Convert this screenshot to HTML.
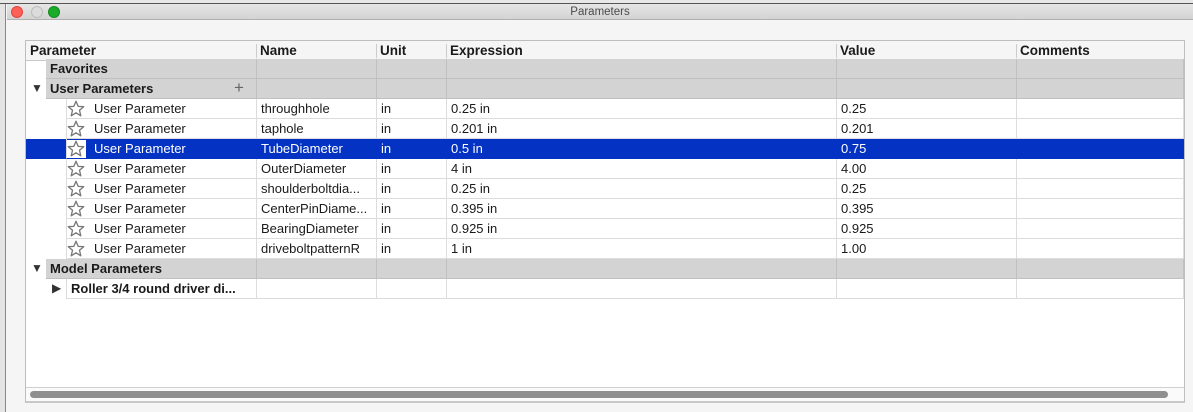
<!DOCTYPE html>
<html><head><meta charset="utf-8"><style>
*{box-sizing:border-box;margin:0;padding:0}
body{width:1193px;height:412px;overflow:hidden;background:#f5f5f5;font-family:"Liberation Sans",Arial,sans-serif;font-size:13px;color:#1a1a1a;position:relative}
.abs{position:absolute}
#bg{left:0;top:0;width:1193px;height:4px;background:#e8e8e8;border-bottom:1px solid #555}
#lstrip{left:0;top:4px;width:6px;height:408px;background:#e4e4e4;border-right:1px solid #888}
#title{left:7px;top:4px;width:1186px;height:16px;background:linear-gradient(#e6e6e6,#d3d3d3);border-bottom:1px solid #b0b0b0;text-align:center;font-size:11.5px;line-height:16px;color:#4a4a4a}
.dot{position:absolute;top:2px;width:12px;height:12px;border-radius:50%}
#box{left:25px;top:40px;width:1160px;height:363px;background:#fff;border:1px solid #bdbdbd;border-bottom:2px solid #c8c8c8}
.row{position:absolute;left:0;width:1158px;height:20px;line-height:19px;white-space:nowrap}
.c{position:absolute;top:0;height:20px;padding-left:4px;border-right:1px solid #dcdcdc;border-bottom:1px solid #dcdcdc;overflow:hidden}
.hdr .c{font-weight:bold;font-size:13.5px;border-bottom:1px solid #c8c8c8;border-right:none;background:#f5f5f5}
.hdr .c span{position:absolute;left:0;top:3px;height:14px;border-left:1px solid #ccc}
.grp .c{background:#d3d3d3;border-color:#c0c0c0;font-weight:bold}
.sel .c{background:#0433c3;color:#fff;border-color:#0433c3}
.star{position:absolute;top:1px}
.tri{position:absolute;font-size:12px;color:#333}
</style></head><body>
<div class="abs" id="bg"></div>
<div class="abs" id="lstrip"></div>
<div class="abs" id="title">Parameters
<div class="dot" style="left:4px;background:#fe5f57;border:1px solid #e0443e"></div>
<div class="dot" style="left:24px;background:#dcdcdc;border:1px solid #bdbdbd"></div>
<div class="dot" style="left:41px;background:#1aab29;border:1px solid #128c22"></div>
</div>
<div class="abs" id="box">
<div class="row hdr" style="top:0;height:18px">
 <div class="c" style="left:0;width:230px">Parameter</div>
 <div class="c" style="left:230px;width:120px"><span></span>Name</div>
 <div class="c" style="left:350px;width:70px"><span></span>Unit</div>
 <div class="c" style="left:420px;width:390px"><span></span>Expression</div>
 <div class="c" style="left:810px;width:180px"><span></span>Value</div>
 <div class="c" style="left:990px;width:168px"><span></span>Comments</div>
</div>
<div class="row grp" style="top:18px">
 <div class="c" style="left:20px;width:211px">Favorites</div>
 <div class="c" style="left:231px;width:120px"></div><div class="c" style="left:351px;width:70px"></div><div class="c" style="left:421px;width:390px"></div><div class="c" style="left:811px;width:180px"></div><div class="c" style="left:991px;width:167px"></div>
</div>
<div class="row grp" style="top:38px">
 <div class="tri" style="left:5px;top:0">▼</div>
 <div class="c" style="left:20px;width:211px">User Parameters<span style="position:absolute;left:188px;top:-1px;font-weight:normal;color:#666;font-size:17px">+</span></div>
 <div class="c" style="left:231px;width:120px"></div><div class="c" style="left:351px;width:70px"></div><div class="c" style="left:421px;width:390px"></div><div class="c" style="left:811px;width:180px"></div><div class="c" style="left:991px;width:167px"></div>
</div>
<div id="rows"></div>
<div class="row grp" style="top:218px">
 <div class="tri" style="left:5px;top:0">▼</div>
 <div class="c" style="left:20px;width:211px">Model Parameters</div>
 <div class="c" style="left:231px;width:120px"></div><div class="c" style="left:351px;width:70px"></div><div class="c" style="left:421px;width:390px"></div><div class="c" style="left:811px;width:180px"></div><div class="c" style="left:991px;width:167px"></div>
</div>
<div class="row" style="top:238px">
 <div class="tri" style="left:26px;top:0">▶</div>
 <div class="c" style="left:40px;width:191px;border-left:1px solid #dcdcdc;font-weight:bold">Roller 3/4 round driver di...</div>
 <div class="c" style="left:231px;width:120px"></div><div class="c" style="left:351px;width:70px"></div><div class="c" style="left:421px;width:390px"></div><div class="c" style="left:811px;width:180px"></div><div class="c" style="left:991px;width:167px"></div>
</div>
<div class="abs" style="left:0;top:346px;width:1158px;height:14px;border-top:1px solid #d0d0d0;background:#fafafa"></div>
<div class="abs" style="left:4px;top:350px;width:1138px;height:7px;border-radius:4px;background:#8f8f8f"></div>
</div>
<script>
var d=[["throughhole","0.25 in","0.25"],["taphole","0.201 in","0.201"],["TubeDiameter","0.5 in","0.75"],["OuterDiameter","4 in","4.00"],["shoulderboltdia...","0.25 in","0.25"],["CenterPinDiame...","0.395 in","0.395"],["BearingDiameter","0.925 in","0.925"],["driveboltpatternR","1 in","1.00"]];
var h="";
d.forEach(function(r,i){
var sel=i==2;
h+='<div class="row'+(sel?' sel':'')+'" style="top:'+(58+i*20)+'px">'+
(sel?'<div class="c" style="left:0;width:41px;border:none"></div>':'')+
'<div class="c" style="left:40px;width:191px;padding-left:27px;border-left:1px solid #dcdcdc">User Parameter</div>'+
(sel?'<div class="abs" style="left:41px;top:1px;width:19px;height:18px;background:#fff"></div>':'')+
'<svg class="star" style="left:41px" width="18" height="18" viewBox="0 0 18 18"><path d="M9 1.2L11.2 6.4L16.7 6.7L12.5 10.3L13.8 15.8L9 12.8L4.2 15.8L5.5 10.3L1.3 6.7L6.8 6.4Z" fill="none" stroke="#777" stroke-width="1.3" stroke-linejoin="round"/></svg>'+
'<div class="c" style="left:231px;width:120px">'+r[0]+'</div><div class="c" style="left:351px;width:70px">in</div><div class="c" style="left:421px;width:390px">'+r[1]+'</div><div class="c" style="left:811px;width:180px">'+r[2]+'</div><div class="c" style="left:991px;width:167px"></div></div>';
});
document.getElementById("rows").outerHTML=h;
</script>
</body></html>
